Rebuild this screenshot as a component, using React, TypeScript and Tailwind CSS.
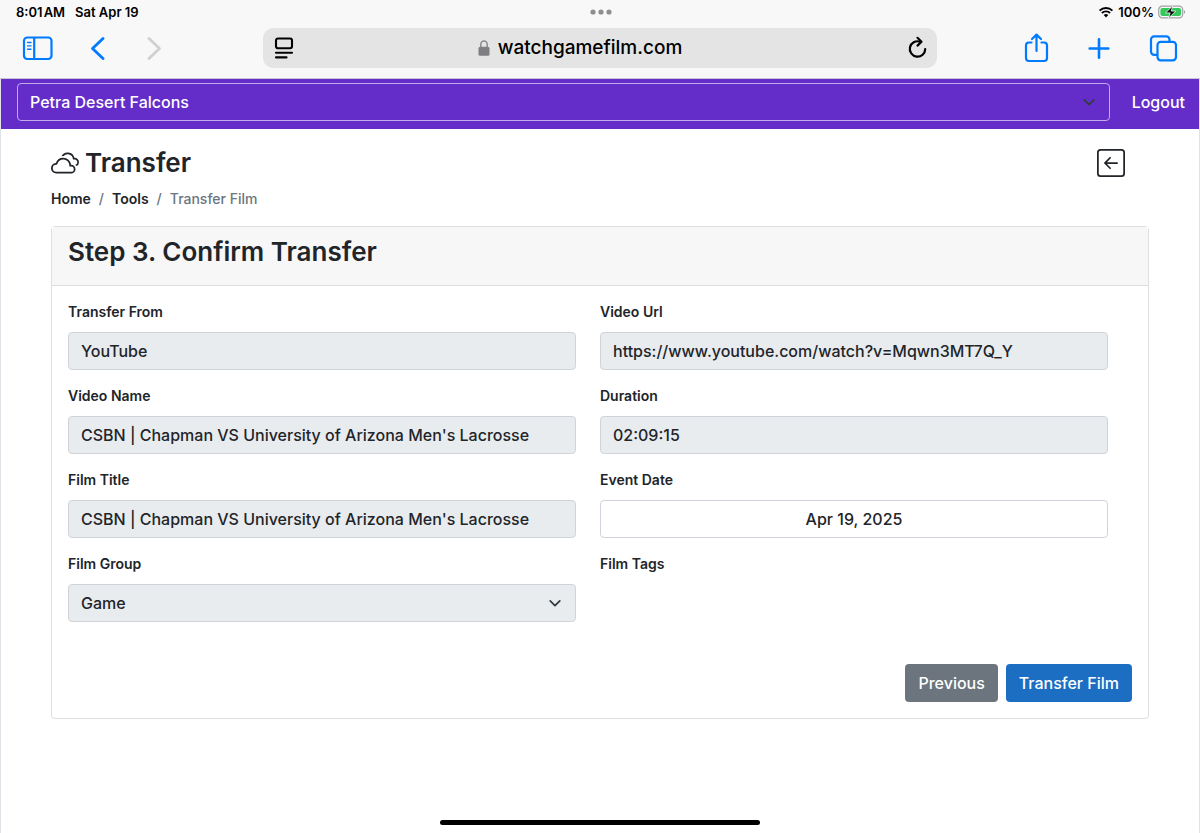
import type { ReactNode } from 'react'
import { BsArrowLeftSquare, BsClouds } from 'react-icons/bs'

const TEAM = 'Petra Desert Falcons'

const inputClass =
  'block h-[38px] w-full rounded border border-[#ced4da] px-3 text-base font-medium text-[#212529]'

interface FieldProps {
  id: string
  label: string
  children?: ReactNode
}

function Field({ id, label, children }: FieldProps) {
  return (
    <div>
      <label htmlFor={id} className="mb-2 block text-sm leading-6 font-semibold">
        {label}
      </label>
      {children}
    </div>
  )
}

function ReadOnlyField({ id, label, value }: { id: string; label: string; value: string }) {
  return (
    <Field id={id} label={label}>
      <input id={id} type="text" readOnly value={value} className={`${inputClass} bg-[#e9ecef]`} />
    </Field>
  )
}

function Chevron() {
  return (
    <svg
      className="pointer-events-none absolute top-3 right-[14px] h-3.5 w-3.5 text-[#343a40]"
      viewBox="0 0 16 16"
      fill="none"
      stroke="currentColor"
      strokeWidth={2}
      strokeLinecap="round"
      strokeLinejoin="round"
    >
      <path d="m2.5 5.5 5.5 5.5 5.5-5.5" />
    </svg>
  )
}

function StatusBar() {
  return (
    <div className="grid h-6 grid-cols-3 items-center pr-[14px] pl-4 text-[13px] leading-4 font-semibold text-black">
      <div className="flex gap-2.5">
        <span>8:01{'\u200a'}AM</span>
        <span>Sat Apr 19</span>
      </div>
      <svg className="h-2 w-6 justify-self-center" viewBox="0 0 24 8" fill="#8e8e8e">
        <circle cx="4" cy="4" r="2.6" />
        <circle cx="12" cy="4" r="2.6" />
        <circle cx="20" cy="4" r="2.6" />
      </svg>
      <div className="flex items-center justify-end gap-1">
        <svg className="h-3 w-4" viewBox="0 0 16 12" fill="none" stroke="#000" strokeWidth="1.9">
          <path d="M1.6 4.6a9.2 9.2 0 0 1 12.8 0" />
          <path d="M3.9 7a5.9 5.9 0 0 1 8.2 0" />
          <path d="M8 11.4 5.7 9a3.3 3.3 0 0 1 4.6 0z" fill="#000" stroke="none" />
        </svg>
        <span>100%</span>
        <svg className="h-3.5 w-7" viewBox="0 0 28 14" fill="none">
          <rect x="0.7" y="1.2" width="24" height="11.6" rx="3.6" stroke="#a2a2a4" strokeWidth="1.2" />
          <rect x="2.4" y="2.9" width="20.6" height="8.2" rx="2" fill="#34c759" />
          <path d="M26 5.2v3.6c1.7-.6 1.7-3 0-3.6z" fill="#a2a2a4" />
          <path d="M14.8.8 7.6 7.9h4.6l-1.8 5.3 7.4-7.1h-4.6z" fill="#000" stroke="#f8f8f8" strokeWidth="0.8" />
        </svg>
      </div>
    </div>
  )
}

function BrowserBar() {
  return (
    <div className="grid h-[54px] grid-cols-[1fr_minmax(0,674px)_1fr] items-center pb-1.5">
      <div className="flex items-center gap-8 pl-[22px] text-[#007aff]">
        <button aria-label="Show sidebar">
          <svg className="h-8 w-8" viewBox="0 0 32 32" fill="none" stroke="currentColor" strokeWidth="2.2">
            <rect x="2" y="5.5" width="27.5" height="21.5" rx="3.2" />
            <path d="M12.2 5.500v21.500" />
            <path d="M5.6 10.5h3.400M5.6 13.900h3.400M5.6 17.300h3.400" strokeWidth="1.4" strokeLinecap="round" />
          </svg>
        </button>
        <button aria-label="Back">
          <svg className="h-6 w-6" viewBox="0 0 24 24" fill="none" stroke="currentColor" strokeWidth="2.8" strokeLinecap="round" strokeLinejoin="round">
            <path d="M17 2.5 6.5 12.5 17 22.5" />
          </svg>
        </button>
        <button aria-label="Forward" disabled className="text-[#d0d0d2]">
          <svg className="h-6 w-6" viewBox="0 0 24 24" fill="none" stroke="currentColor" strokeWidth="2.8" strokeLinecap="round" strokeLinejoin="round">
            <path d="M7 2.5 17.5 12.5 7 22.5" />
          </svg>
        </button>
      </div>

      <div className="flex h-10 items-center rounded-[10px] bg-[#e4e4e4] px-2 text-black">
        <button aria-label="Page menu">
          <svg className="h-6 w-6" viewBox="0 0 24 24" fill="none" stroke="currentColor" strokeWidth="2.1" strokeLinecap="round">
            <rect x="5" y="2.500" width="16" height="9.800" rx="2" />
            <path d="M5 16.800h16M5 21.400h10.500" />
          </svg>
        </button>
        <div className="flex flex-1 items-center justify-center gap-2 pr-10">
          <svg className="h-4 w-3" viewBox="0 0 12 16" fill="none">
            <path d="M2.8 8V4.6a3.2 3.5 0 0 1 6.4 0V8" stroke="#8a8a8e" strokeWidth="1.5" />
            <rect x="0.5" y="6.8" width="11" height="9" rx="1.5" fill="#7f7f83" />
          </svg>
          <span className="text-[19px] leading-6 font-medium">watchgamefilm.com</span>
        </div>
        <button aria-label="Reload">
          <svg className="h-6 w-6" viewBox="0 0 24 24" fill="none" stroke="currentColor" strokeWidth="2.2" strokeLinecap="round" strokeLinejoin="round">
            <path d="M15 5.700A7.700 7.700 0 1 0 20.200 13" />
            <path d="M12.500 1.800l4 3.900-4 3.900" />
          </svg>
        </button>
      </div>

      <div className="flex items-center justify-end gap-8 pr-5 text-[#007aff]">
        <button aria-label="Share">
          <svg className="h-8 w-8" viewBox="0 0 32 32" fill="none" stroke="currentColor" strokeWidth="2.2" strokeLinecap="round" strokeLinejoin="round">
            <path d="M11.5 10.500H9a3 3 0 0 0-3 3v12.500a3 3 0 0 0 3 3h15a3 3 0 0 0 3-3V13.500a3 3 0 0 0-3-3h-2.500" />
            <path d="M16.500 19V2.800M12 7l4.500-4.400L21 7" />
          </svg>
        </button>
        <button aria-label="New tab">
          <svg className="h-8 w-8" viewBox="0 0 32 32" fill="none" stroke="currentColor" strokeWidth="2.6" strokeLinecap="round">
            <path d="M15 7.200v18.600M5.700 16.500h18.600" />
          </svg>
        </button>
        <button aria-label="Tabs">
          <svg className="h-8 w-8" viewBox="0 0 32 32" fill="none" stroke="currentColor" strokeWidth="2.2" strokeLinejoin="round">
            <rect x="9.500" y="9.800" width="18.500" height="18.500" rx="3.200" />
            <path d="M9.500 22.800H6.200A3.200 3.200 0 0 1 3 19.600V7.500A3.200 3.200 0 0 1 6.200 4.300h12.100a3.200 3.200 0 0 1 3.200 3.200v2.300" />
          </svg>
        </button>
      </div>
    </div>
  )
}

export default function App() {
  return (
    <div className="flex min-h-screen flex-col bg-white font-['Inter',sans-serif] text-[#212529]">
      <header className="border-b border-[#c8c4d4] bg-[#f8f8f9]">
        <StatusBar />
        <BrowserBar />
      </header>

      <div className="flex flex-1 flex-col border-x border-[#dee2e6]">
        <nav className="flex items-start gap-[22px] bg-[#642dca] pt-1 pr-[14px] pb-2 pl-4 text-white">
          <div className="relative flex-1">
            <select
              aria-label="Team"
              defaultValue={TEAM}
              className="block h-[38px] w-full appearance-none rounded border border-[#c1abea] bg-transparent px-3 text-base font-medium text-white"
            >
              <option>{TEAM}</option>
            </select>
            <Chevron />
          </div>
          <a href="#logout" className="text-base leading-[38px] font-medium">
            Logout
          </a>
        </nav>

        <main className="px-[50px] pt-4">
          <div className="flex items-center justify-between pr-6">
            <h1 className="flex items-center gap-1.5 text-[26px] leading-9 font-semibold">
              <BsClouds className="h-7 w-7" />
              Transfer
            </h1>
            <button aria-label="Go back">
              <BsArrowLeftSquare className="h-7 w-7" />
            </button>
          </div>

          <nav aria-label="breadcrumb" className="mt-1.5 flex gap-2 text-sm leading-6 font-semibold">
            <a href="#home">Home</a>
            <span className="font-medium text-[#6c757d]">/</span>
            <a href="#tools">Tools</a>
            <span className="font-medium text-[#6c757d]">/</span>
            <span className="font-medium text-[#6c757d]">Transfer Film</span>
          </nav>

          <section className="mt-[15px] rounded border border-[#dfdfdf]">
            <div className="border-b border-[#dfdfdf] bg-[#f7f7f7] px-4 pt-2 pb-4">
              <h2 className="text-[26px] leading-[34px] font-semibold">Step 3. Confirm Transfer</h2>
            </div>

            <form className="px-4 pt-[14px] pb-4" onSubmit={e => e.preventDefault()}>
              <div className="grid grid-cols-2 gap-x-6 gap-y-[14px] pr-6">
                <ReadOnlyField id="from" label="Transfer From" value="YouTube" />
                <ReadOnlyField id="url" label="Video Url" value="https://www.youtube.com/watch?v=Mqwn3MT7Q_Y" />
                <ReadOnlyField id="name" label="Video Name" value="CSBN | Chapman VS University of Arizona Men's Lacrosse" />
                <ReadOnlyField id="duration" label="Duration" value="02:09:15" />
                <ReadOnlyField id="title" label="Film Title" value="CSBN | Chapman VS University of Arizona Men's Lacrosse" />
                <Field id="date" label="Event Date">
                  <input id="date" type="text" defaultValue="Apr 19, 2025" className={`${inputClass} bg-white text-center`} />
                </Field>
                <Field id="group" label="Film Group">
                  <div className="relative">
                    <select id="group" defaultValue="Game" className={`${inputClass} appearance-none bg-[#e9ecef]`}>
                      <option>Game</option>
                    </select>
                    <Chevron />
                  </div>
                </Field>
                <div className="text-sm leading-6 font-semibold">Film Tags</div>
              </div>

              <div className="mt-[42px] flex justify-end gap-2 text-base font-medium text-white">
                <button type="button" className="h-[38px] rounded bg-[#6c757d] px-[13px]">
                  Previous
                </button>
                <button type="submit" className="h-[38px] rounded bg-[#1b6ec2] px-[13px]">
                  Transfer Film
                </button>
              </div>
            </form>
          </section>
        </main>

        <div className="mx-auto mt-auto mb-2 h-[5px] w-80 rounded-full bg-black" />
      </div>
    </div>
  )
}
